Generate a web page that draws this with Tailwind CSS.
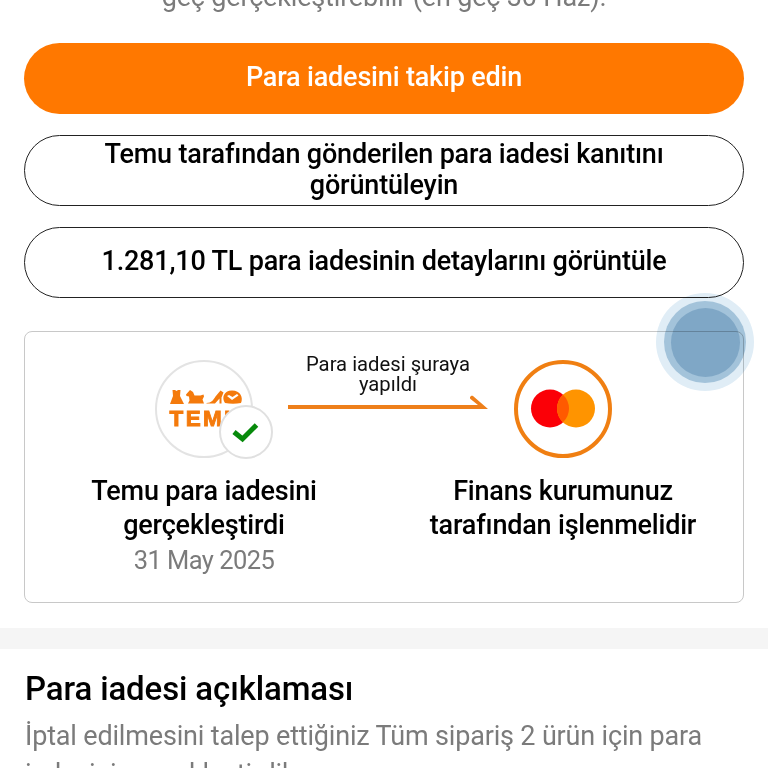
<!DOCTYPE html>
<html lang="tr">
<head>
<meta charset="utf-8">
<title>Para iadesi</title>
<script src="https://cdn.jsdelivr.net/npm/@tailwindcss/browser@4"></script>
</head>
<body class="bg-white">
<main class="relative h-[768px] w-[768px] overflow-hidden bg-white font-[Roboto,sans-serif] text-black">
  <div class="flex h-[43px] items-end justify-center pb-[28px]">
    <p class="whitespace-nowrap text-[27px] leading-[36px] tracking-[-0.17px] text-[#7b7b7b]">geç gerçekleştirebilir (en geç 30 Haz).</p>
  </div>

  <section class="mx-6 flex flex-col gap-[21px] text-center text-[27px] font-medium leading-[31px] tracking-[-0.18px]">
    <button class="flex h-[71px] items-center justify-center rounded-full bg-[#ff7800] pb-[3px] text-white">Para iadesini takip edin</button>
    <button class="flex h-[71px] items-center justify-center rounded-full border border-[#222] pb-[1px]"><span>Temu tarafından gönderilen para iadesi kanıtını<br>görüntüleyin</span></button>
    <button class="flex h-[71px] items-center justify-center rounded-full border border-[#222] pb-[2px]">1.281,10 TL para iadesinin detaylarını görüntüle</button>
  </section>

  <section class="mx-6 mt-[33px] flex h-[272px] rounded-[8px] border border-[#c8c8c8] pt-[28px]">
    <div class="flex w-[358px] flex-col items-center">
      <div class="relative h-[98px] w-[98px]">
        <svg class="h-[98px] w-[98px]" viewBox="0 0 98 98">
          <circle cx="49" cy="49" r="48" fill="#fff" stroke="#e3e3e3" stroke-width="2"/>
          <g fill="#f47a0c">
            <path d="M17.500 30h2.500l1.500 1 1.500-1h2.500l-.500 6 4 8H15l3-8z"/>
            <path d="M31 34.500l4-4.500 3 2 1.500 3.500h6l3-1 .5 2-1.500 3 1.500 4H33l1.500-3-.5-4-2.500-.500z"/>
            <path d="M51.500 43c5 0 7-3.500 9-6.500l5-6 3 2-2 5v6h-2v-5l-4.500 5h-8.500z"/>
            <path fill-rule="evenodd" d="M70 43c-3.500-5-1.500-12.500 7-12.500s11.500 7 9 12.500c-5 1-11 1-16 0zM72 36l5 4 6.500-4.500-1.500-1.500-4.500 3-3.500-2z"/>
          </g>
          <text x="14.500" y="66" font-family="Liberation Sans" font-size="22.500" font-weight="700" fill="#f47a0c" stroke="#f47a0c" stroke-width=".9" textLength="71">TEMU</text>
        </svg>
        <div class="absolute left-[64px] top-[45px] flex h-[54px] w-[54px] items-center justify-center rounded-full border-2 border-[#e0e0e0] bg-white">
          <svg class="h-[28px] w-[32px]" viewBox="0 0 32 28"><path d="M4 14l8.500 7 14-14" fill="none" stroke="#078a0b" stroke-width="5"/></svg>
        </div>
      </div>
      <h2 class="mt-[16px] text-center text-[27px] font-medium leading-[34px] tracking-[-0.19px]">Temu para iadesini<br>gerçekleştirdi</h2>
      <p class="mt-[1px] text-[25.500px] leading-[34px] tracking-[-0.55px] text-[#7b7b7b]">31 May 2025</p>
    </div>
    <div class="flex w-[360px] flex-col items-center">
      <svg class="h-[98px] w-[98px]" viewBox="0 0 98 98">
        <circle cx="49" cy="49" r="47" fill="#fff" stroke="#f07f12" stroke-width="4"/>
        <circle cx="36" cy="48.500" r="19" fill="#fb0007"/>
        <circle cx="62" cy="48.500" r="19" fill="#ff9400"/>
        <path d="M49 34.640a19 19 0 0 1 0 27.720a19 19 0 0 1 0-27.720z" fill="#ff5a00"/>
      </svg>
      <h2 class="mt-[16px] text-center text-[27px] font-medium leading-[34px] tracking-[-0.19px]">Finans kurumunuz<br>tarafından işlenmelidir</h2>
    </div>
  </section>
  <div class="absolute left-[288px] top-[354px] flex w-[200px] flex-col items-center">
    <p class="text-center text-[20.250px] leading-[20px] text-[#111]">Para iadesi şuraya<br>yapıldı</p>
    <svg class="h-[16px] w-[200px]" viewBox="0 0 200 16"><path d="M0 11h190l-7.500-6c-1.500-1.500.5-4 2.500-3L200 15H0z" fill="#ee7f1a"/></svg>
  </div>

  <div class="mt-[25px] h-[21px] bg-[#f5f5f5]"></div>
  <section class="ml-[25px] mr-6 pt-[20px]">
    <h1 class="whitespace-nowrap text-[33px] font-medium leading-[40px] tracking-[-0.12px]">Para iadesi açıklaması</h1>
    <p class="mt-[8px] whitespace-nowrap text-[27px] leading-[38px] tracking-[-0.17px] text-[#7b7b7b]">İptal edilmesini talep ettiğiniz Tüm sipariş 2 ürün için para<br>iadesini gerçekleştirdik.</p>
  </section>

  <div class="absolute left-[656px] top-[293px] flex h-[98px] w-[98px] items-center justify-center rounded-full bg-[#e0edf6] mix-blend-multiply">
    <div class="flex h-[82px] w-[82px] items-center justify-center rounded-full bg-[#a3c3da]">
      <div class="h-[69px] w-[69px] rounded-full bg-[#7fa7c6]"></div>
    </div>
  </div>
</main>
</body>
</html>
